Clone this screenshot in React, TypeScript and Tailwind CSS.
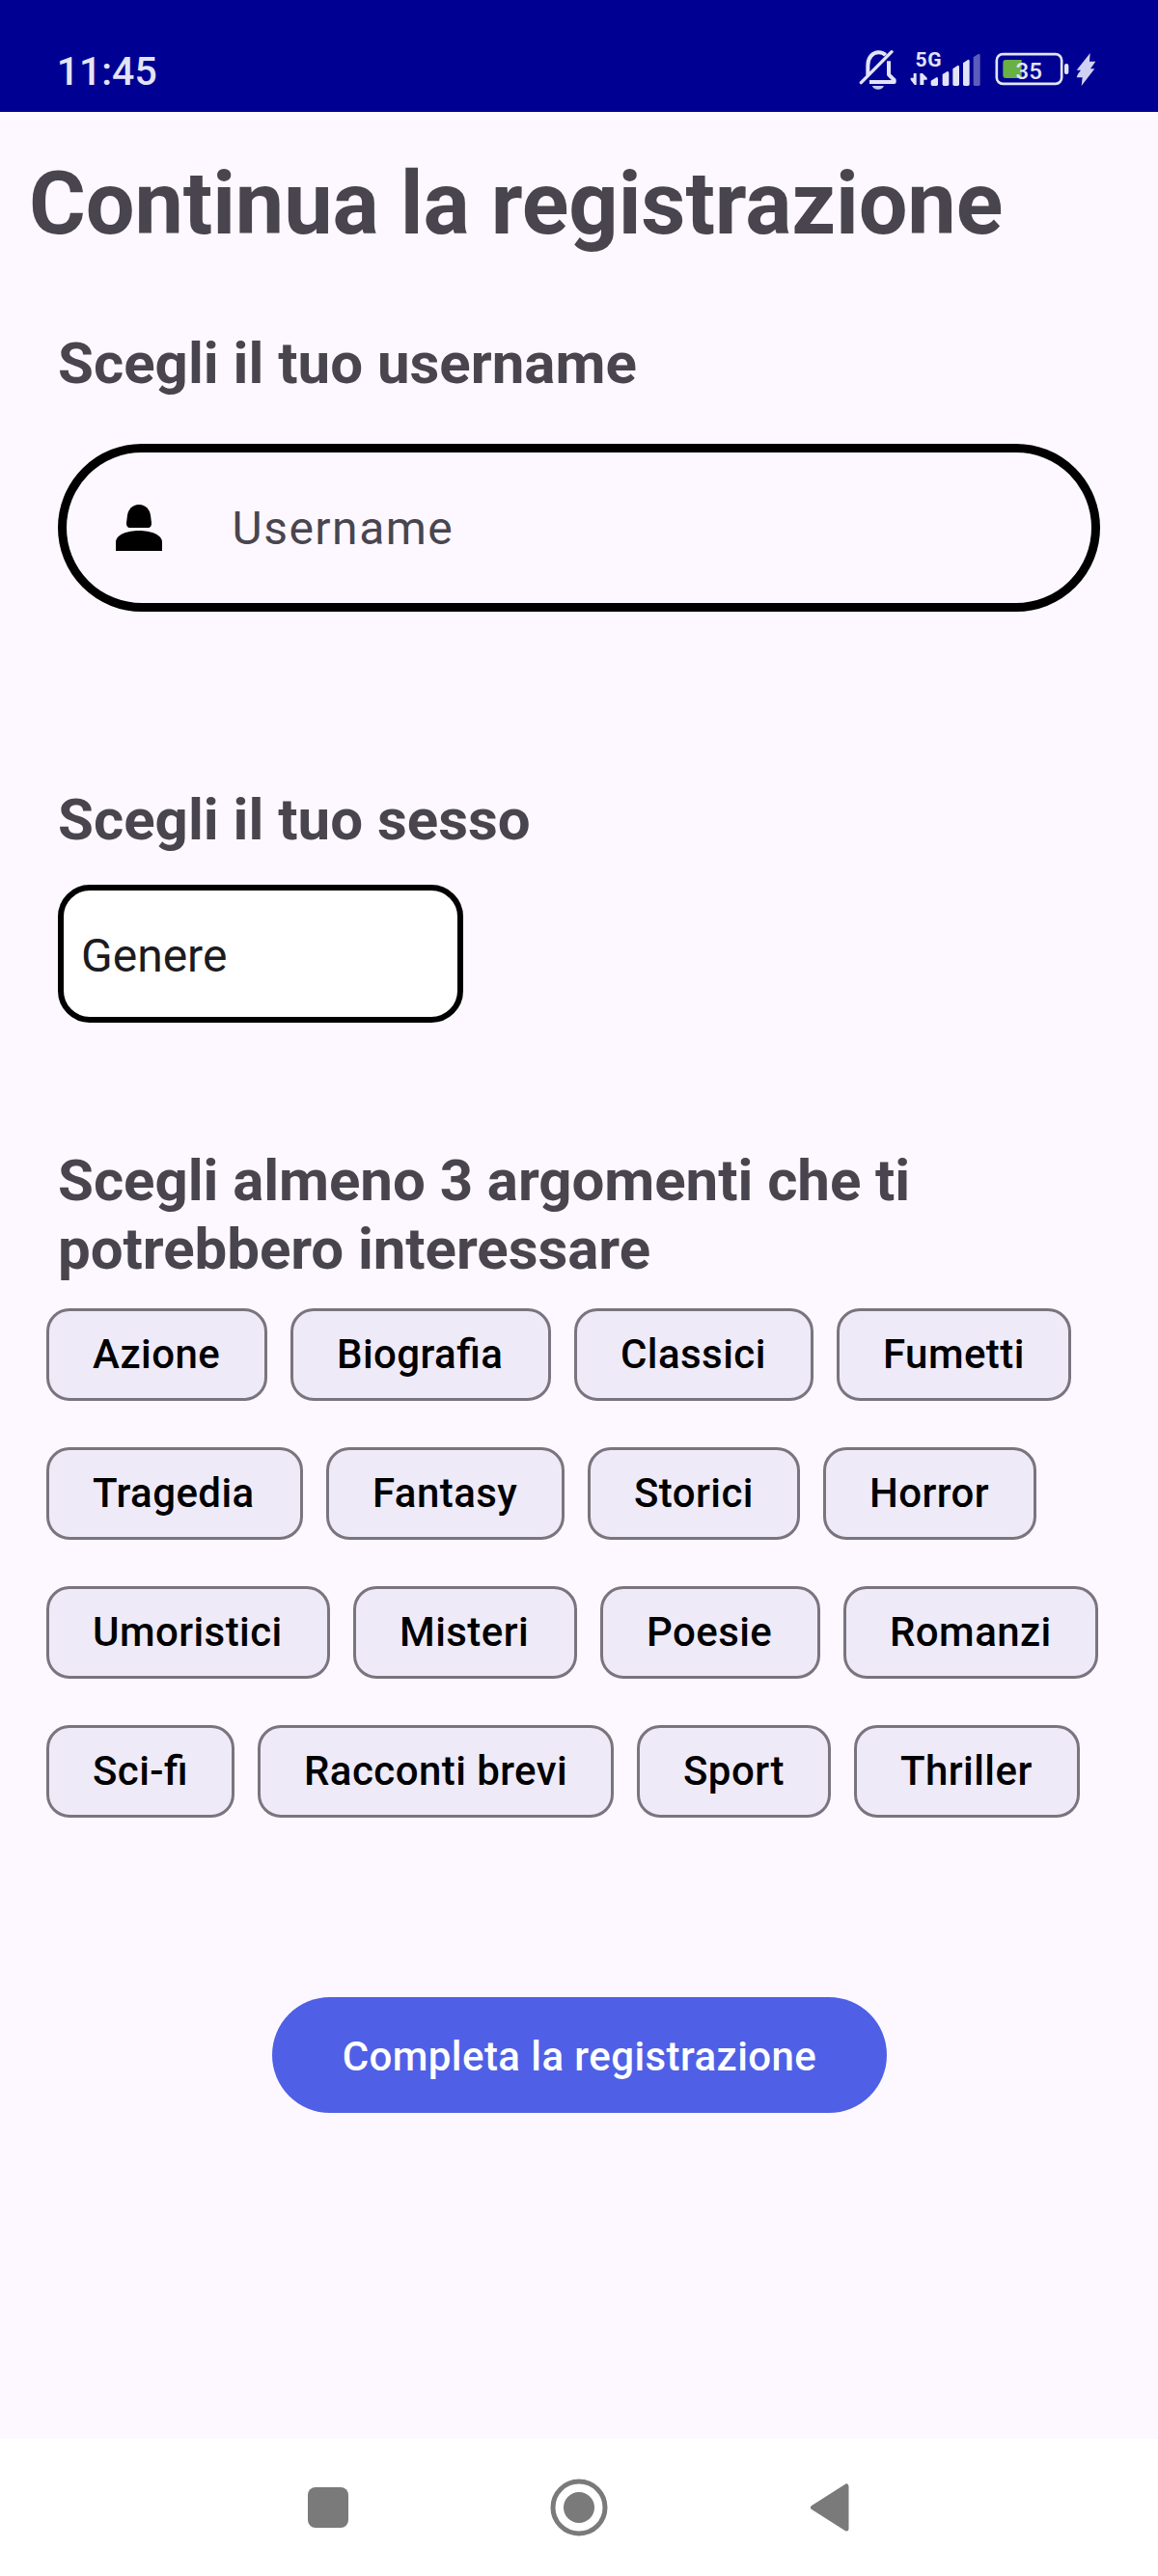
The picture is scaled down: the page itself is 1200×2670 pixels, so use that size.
import type { ReactNode } from "react";

const topicRows = [
  [
    { label: "Azione", width: "w-[229px]" },
    { label: "Biografia", width: "w-[270px]" },
    { label: "Classici", width: "w-[248px]" },
    { label: "Fumetti", width: "w-[243px]" },
  ],
  [
    { label: "Tragedia", width: "w-[266px]" },
    { label: "Fantasy", width: "w-[247px]" },
    { label: "Storici", width: "w-[220px]" },
    { label: "Horror", width: "w-[221px]" },
  ],
  [
    { label: "Umoristici", width: "w-[294px]" },
    { label: "Misteri", width: "w-[232px]" },
    { label: "Poesie", width: "w-[228px]" },
    { label: "Romanzi", width: "w-[264px]" },
  ],
  [
    { label: "Sci-fi", width: "w-[195px]" },
    { label: "Racconti brevi", width: "w-[369px]" },
    { label: "Sport", width: "w-[201px]" },
    { label: "Thriller", width: "w-[234px]" },
  ],
];

// Status icons are drawn on a grid three times finer than their pixel size.
function MutedBell() {
  return (
    <svg className="h-[42px] w-[40px]" viewBox="60 63 120 126" fill="none" stroke="#E3E3F8">
      <path d="M88 145V113C88 90 102 73 121 73C130 73 138 76 143 82" strokeWidth="12" />
      <path d="M67 167L162 71" strokeWidth="10" strokeLinecap="round" />
      <path d="M153 100V142L170 159V165H93" strokeWidth="12" strokeLinejoin="round" />
      <path d="M101 177H138C135 184 129 188 120 188S104 184 101 177Z" fill="#C9C9F0" stroke="none" />
    </svg>
  );
}

function Signal() {
  return (
    <div className="relative h-[42px] w-[74px]">
      <span className="absolute left-[5.5px] top-[-1px] text-[21px] font-bold leading-[25px] tracking-[0.7px] text-[#E3E3F8]">5G</span>
      <svg className="h-[42px] w-[74px]" viewBox="220 63 222 126" fill="#E3E3F8">
        <path d="M231 138H240V174H234L222 158V152H231Z" />
        <path d="M251 138H259L273 152V158H263V174H251Z" />
        <path d="M285 161L303 150Q307 150 307 155V172Q307 177 302 177H290Q285 177 285 172Z" />
        <path d="M321 141L336 132Q341 131 341 137V172Q341 177 336 177H326Q321 177 321 172Z" />
        <path d="M353 124L368 114Q373 112 373 119V172Q373 177 368 177H358Q353 177 353 172Z" />
        <path d="M385 106L400 96Q405 94 405 101V172Q405 177 400 177H390Q385 177 385 172Z" />
        <path d="M417 88L432 78Q438 76 438 83V172Q438 177 433 177H422Q417 177 417 172Z" fill="#5C5CBC" />
      </svg>
    </div>
  );
}

function Battery() {
  return (
    <div className="relative h-[42px] w-[106px]">
      <svg className="h-[42px] w-[106px]" viewBox="482 63 318 126">
        <rect x="487.500" y="78.500" width="202" height="92" rx="19" fill="none" stroke="#E3E3F8" strokeWidth="8" />
        <path d="M516 96H565V153H516Q507 153 507 144V105Q507 96 516 96Z" fill="#69B045" />
        <rect x="698" y="108" width="13" height="33" rx="6" fill="#E3E3F8" />
        <path d="M778 75L736 128H749L740 140L736 151H754L751 177L792 124H779L795 101H776Z" fill="#D0D0F2" />
      </svg>
      <span className="absolute left-[21.5px] top-[9px] text-[24px] font-medium leading-[28px] text-[#E3E3F8]">35</span>
    </div>
  );
}

function StatusBar() {
  return (
    <header className="flex h-[116px] items-start justify-between bg-[#000092] pl-[58.7px] pr-[63px]">
      <span className="mt-[50px] text-[41px] font-medium leading-[49px] text-[#E3E3F8]">11:45</span>
      <div className="mt-[51px] flex">
        <MutedBell />
        <div className="ml-[13px]">
          <Signal />
        </div>
        <div className="ml-[14px]">
          <Battery />
        </div>
      </div>
    </header>
  );
}

function SectionTitle({ children }: { children: ReactNode }) {
  return <h2 className="text-[60px] font-bold leading-[71px]">{children}</h2>;
}

function Chip({ label, width }: { label: string; width: string }) {
  return (
    <button
      className={`${width} h-24 whitespace-nowrap rounded-[24px] border-[3px] border-[#79747E] bg-[#EFEAF8] pb-px pl-[45px] text-left text-[42px] font-medium leading-[49px] tracking-[0.43px] text-black [font-feature-settings:'liga']`}
    >
      {label}
    </button>
  );
}

function NavigationBar() {
  return (
    <nav className="flex h-[142px] items-center bg-white pl-[319px]">
      <div className="size-[42px] rounded-[8px] bg-[#7A7A7A]" />
      <svg className="ml-[209px] size-[60px]" viewBox="0 0 60 60">
        <circle cx="30" cy="30" r="27" fill="none" stroke="#7A7A7A" strokeWidth="5" />
        <circle cx="30" cy="30" r="16" fill="#7A7A7A" />
      </svg>
      <svg className="ml-[209px] h-[50px] w-[42px]" viewBox="0 0 42 50">
        <path d="M3.500 25L38 3V47Z" fill="#7A7A7A" stroke="#7A7A7A" strokeWidth="5" strokeLinejoin="round" />
      </svg>
    </nav>
  );
}

export default function App() {
  return (
    <div className="flex h-[2670px] w-[1200px] flex-col bg-[#FDF8FF] font-['Roboto',sans-serif] text-[#49454F]">
      <StatusBar />
      <main className="flex flex-1 flex-col">
        <h1 className="ml-[30px] mt-[43px] text-[90px] font-bold leading-[106px] tracking-[-0.11px]">
          Continua la registrazione
        </h1>

        <section className="mx-[60px] mt-[76px]">
          <SectionTitle>Scegli il tuo username</SectionTitle>
          <div className="mt-[48px] flex h-[174px] items-center rounded-[87px] border-[9px] border-black pl-[51px]">
            <svg className="size-[48px]" viewBox="0 0 48 48" fill="black">
              <path d="M24 0C31 0 35 5 36 11L37 19C37 22 36 24 33 24H15C12 24 11 22 11 19L12 11C13 5 17 0 24 0Z" />
              <path d="M0 48V39C0 31 12 27 24 27S48 31 48 39V48Z" />
            </svg>
            <span className="ml-[72.5px] pt-[2px] text-[48px] leading-[56px] tracking-[1.5px]">Username</span>
          </div>
        </section>

        <section className="mx-[60px] mt-[180px]">
          <SectionTitle>Scegli il tuo sesso</SectionTitle>
          <div className="mt-[32px] flex h-[143px] w-[420px] items-center rounded-[33px] border-[6px] border-black bg-white pl-[18px]">
            <span className="pt-[5px] text-[48px] leading-[56px] text-[#1C1B1F]">Genere</span>
          </div>
        </section>

        <section className="mt-[128px] flex flex-col">
          <div className="ml-[60px] w-[1000px] tracking-[-0.05px]">
            <SectionTitle>Scegli almeno 3 argomenti che ti potrebbero interessare</SectionTitle>
          </div>
          <div className="ml-12 mt-[26px] flex flex-col gap-12">
            {topicRows.map((row) => (
              <div key={row[0].label} className="flex gap-6">
                {row.map((topic) => (
                  <Chip key={topic.label} label={topic.label} width={topic.width} />
                ))}
              </div>
            ))}
          </div>
        </section>

        <button className="ml-[282px] mt-[186px] h-[120px] w-[637px] rounded-full bg-[#4F60E6] pt-[3px] text-[42px] font-medium leading-[49px] tracking-[0.43px] text-white">
          Completa la registrazione
        </button>
      </main>
      <NavigationBar />
    </div>
  );
}
